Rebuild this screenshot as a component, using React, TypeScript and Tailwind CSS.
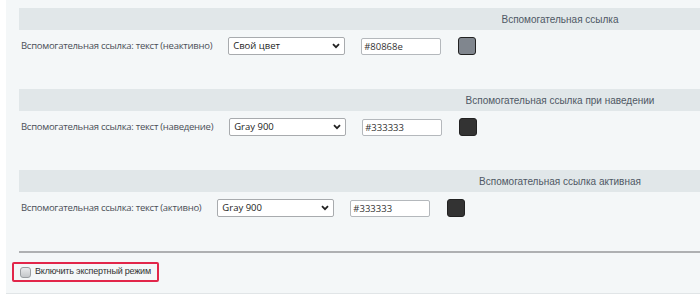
import React from "react";

type Row = {
  title: string;
  label: string;
  value: string;
  hex: string;
};

const rows: Row[] = [
  {
    title: "Вспомогательная ссылка",
    label: "Вспомогательная ссылка: текст (неактивно)",
    value: "Свой цвет",
    hex: "#80868e",
  },
  {
    title: "Вспомогательная ссылка при наведении",
    label: "Вспомогательная ссылка: текст (наведение)",
    value: "Gray 900",
    hex: "#333333",
  },
  {
    title: "Вспомогательная ссылка активная",
    label: "Вспомогательная ссылка: текст (активно)",
    value: "Gray 900",
    hex: "#333333",
  },
];

const Chevron = () => (
  <svg width="8" height="6" viewBox="0 0 8 6" className="absolute right-[5px] top-[6px] pointer-events-none">
    <path d="M1 1.2l3 3 3-3" fill="none" stroke="#222" strokeWidth="1.8" />
  </svg>
);

const Section = ({ row }: { row: Row }) => (
  <div className="mb-[34px]">
    <div className="flex h-[22px] items-center bg-[#e1e7e9]">
      <div className="w-[401px] shrink-0" />
      <div className="flex-1 text-center font-['Liberation_Sans',Arial,sans-serif] text-[10px] text-[#4f5864]">
        {row.title}
      </div>
    </div>
    <div className="mt-[7px] flex h-[18px] items-center gap-[16px] pl-[2px]">
      <span className="font-['Open_Sans',sans-serif] text-[9.5px] leading-[18px] tracking-[-0.27px] text-[#4a4f57] whitespace-nowrap">
        {row.label}
      </span>
      <div className="relative h-[18px] w-[117px]">
        <select
          defaultValue={row.value}
          className="block h-[18px] w-full appearance-none rounded-[2px] border border-[#a8abae] bg-white pl-[4px] font-['Open_Sans',sans-serif] text-[9.5px] leading-[16px] text-[#222] outline-none"
        >
          <option>{row.value}</option>
        </select>
        <Chevron />
      </div>
      <input
        defaultValue={row.hex}
        className="block h-[17px] w-[80px] rounded-[2px] border border-[#b4b8bc] bg-white pl-[2px] font-['Open_Sans',sans-serif] text-[9.5px] text-[#333] outline-none"
      />
      <div
        className="ml-[1px] h-[18px] w-[18px] rounded-[3px] border border-[#222]"
        style={{ backgroundColor: row.hex }}
      />
    </div>
  </div>
);

export default function App() {
  return (
    <div className="h-[296px] w-[700px] overflow-hidden bg-white pl-[6px]">
      <div className="h-[294px] border-b border-[#e1e5e7] bg-[#f4f7f8] pt-[8px]">
        <div className="pl-[13px]">
          {rows.map((r) => (
            <Section key={r.title} row={r} />
          ))}
          <div className="mt-[6px] h-[2px] bg-[#aeb0b2]" />
        </div>
        <div className="ml-[6px] mt-[9px] flex h-[20px] w-[147px] items-center gap-[4px] rounded-[2px] border-2 border-[#e2264a] pl-[6px]">
          <span className="h-[11px] w-[11px] shrink-0 rounded-[3px] border border-[#9a9ea2] bg-gradient-to-b from-[#e8eaec] to-[#c4c7ca]" />
          <span className="whitespace-nowrap font-['Liberation_Sans',Arial,sans-serif] text-[9px] tracking-[-0.2px] text-[#333]">
            Включить экспертный режим
          </span>
        </div>
      </div>
    </div>
  );
}
